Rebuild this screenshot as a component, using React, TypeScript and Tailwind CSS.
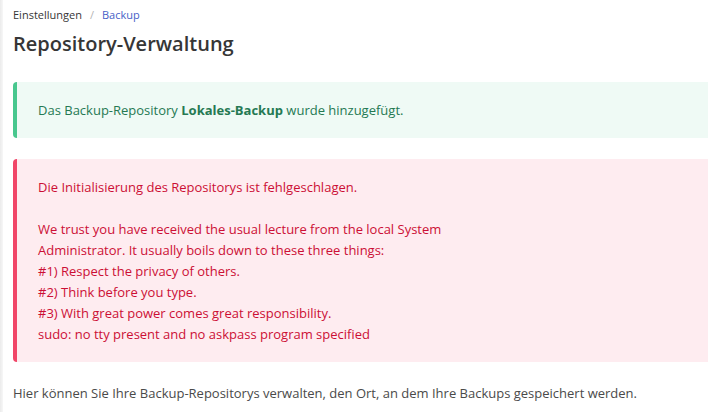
import React from "react";

const font = { fontFamily: '"Open Sans", "Noto Sans", sans-serif' };

export default function App() {
  return (
    <div className="flex w-[708px] min-h-[412px] overflow-hidden bg-white" style={font}>
      <div className="w-[3px] shrink-0 bg-gradient-to-r from-[#ebebeb] to-[#f7f7f7]" />
      <div className="min-w-[760px] pl-[10px] pt-[6px] text-[13px] leading-[21px] text-[#4a4a4a]">
        {/* Breadcrumb */}
        <nav className="flex items-center text-[11px] leading-[18px]">
          <span className="text-[#363636]">Einstellungen</span>
          <span className="px-[8px] text-[#b5b5b5]">/</span>
          <span className="text-[#485fc7]">Backup</span>
        </nav>
        <h1 className="mt-[6px] text-[20px] font-semibold leading-[28px] text-[#363636]">
          Repository-Verwaltung
        </h1>

        <div className="mt-[24px] mb-[21px] rounded-l border-l-4 border-[#48c78e] bg-[#effaf5] px-[21px] py-[17.5px] text-[#257953]">
          Das Backup-Repository <strong className="font-bold">Lokales-Backup</strong> wurde hinzugefügt.
        </div>

        <div className="mb-[21px] rounded-l border-l-4 border-[#f14668] bg-[#feecf0] px-[21px] py-[17.5px] text-[#cc0f35]">
          <p>Die Initialisierung des Repositorys ist fehlgeschlagen.</p>
          <p className="mt-[21px]">
            We trust you have received the usual lecture from the local System
            <br />
            Administrator. It usually boils down to these three things:
          </p>
          <p>#1) Respect the privacy of others.</p>
          <p>#2) Think before you type.</p>
          <p>#3) With great power comes great responsibility.</p>
          <p>sudo: no tty present and no askpass program specified</p>
        </div>

        <p>Hier können Sie Ihre Backup-Repositorys verwalten, den Ort, an dem Ihre Backups gespeichert werden.</p>
      </div>
    </div>
  );
}
